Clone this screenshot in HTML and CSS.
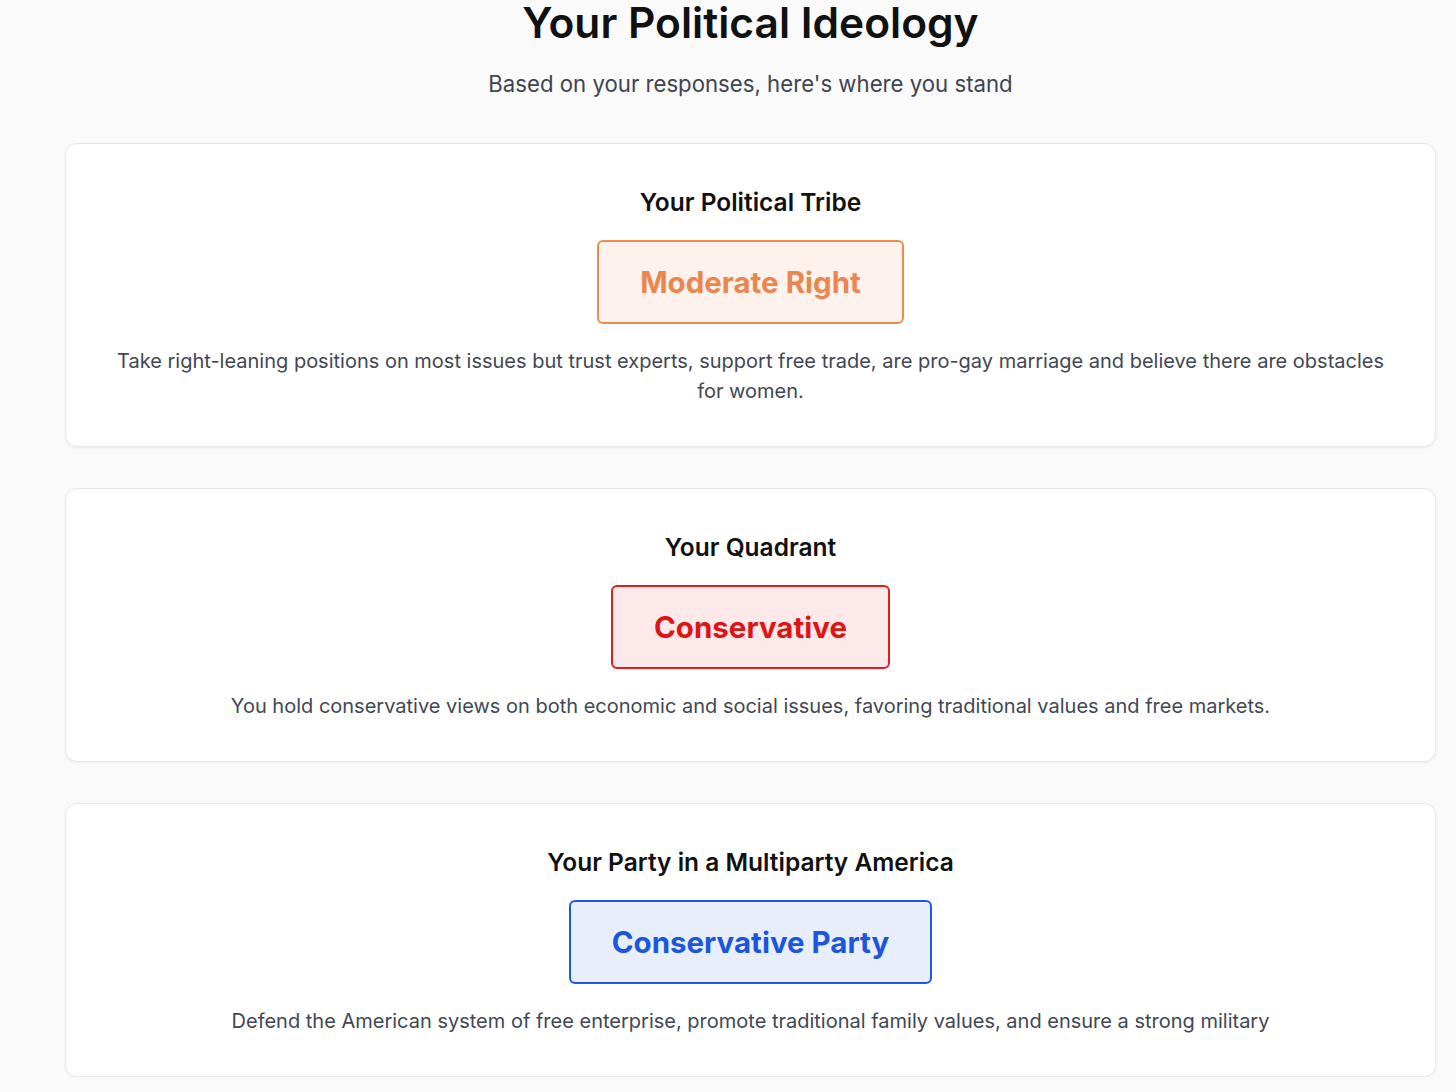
FILE: index.html
```html
<!DOCTYPE html>
<html lang="en">
<head>
<meta charset="utf-8">
<title>Your Political Ideology</title>
<link rel="stylesheet" href="styles.css">
</head>
<body>
<main class="page">
  <header class="intro">
    <h1 class="page-title">Your Political Ideology</h1>
    <p class="page-subtitle">Based on your responses, here's where you stand</p>
  </header>

  <section class="card">
    <h2 class="card-title">Your Political Tribe</h2>
    <div class="badge badge-orange">Moderate Right</div>
    <p class="card-desc">Take right-leaning positions on most issues but trust experts, support free trade, are pro-gay marriage and believe there are obstacles for women.</p>
  </section>

  <section class="card">
    <h2 class="card-title">Your Quadrant</h2>
    <div class="badge badge-red">Conservative</div>
    <p class="card-desc">You hold conservative views on both economic and social issues, favoring traditional values and free markets.</p>
  </section>

  <section class="card">
    <h2 class="card-title">Your Party in a Multiparty America</h2>
    <div class="badge badge-blue">Conservative Party</div>
    <p class="card-desc">Defend the American system of free enterprise, promote traditional family values, and ensure a strong military</p>
  </section>
</main>
</body>
</html>
```

FILE: styles.css
```css
* { box-sizing: border-box; }

html, body {
  margin: 0;
  padding: 0;
  background: #fafafa;
}

body {
  font-family: Inter, "Noto Sans", "Liberation Sans", sans-serif;
  color: #111111;
}

.page {
  width: 1371px;
  margin-left: 65px;
  display: flex;
  flex-direction: column;
  gap: 41px;
}

.intro {
  text-align: center;
  margin-top: -4.5px;
  margin-bottom: 3px;
}

.page-title {
  margin: 0;
  font-size: 42.5px;
  line-height: 54px;
  font-weight: 600;
  color: #111111;
}

.page-subtitle {
  margin: 19.5px 0 0;
  font-size: 22.2px;
  line-height: 30px;
  color: #3f4451;
}

.card {
  background: #ffffff;
  border: 1px solid #e5e7eb;
  border-radius: 12px;
  box-shadow: 0 1px 3px rgba(0, 0, 0, 0.06);
  padding: 42px 40px 40px;
  display: flex;
  flex-direction: column;
  align-items: center;
  text-align: center;
}

.card-title {
  margin: 0;
  font-size: 24.5px;
  line-height: 32px;
  font-weight: 600;
  color: #111111;
}

.badge {
  margin-top: 22px;
  padding: 24px 41px;
  border: 2px solid;
  border-radius: 6px;
  font-size: 29.5px;
  line-height: 32px;
  font-weight: 700;
}

.badge-orange {
  color: #ea8650;
  border-color: #ef8a4f;
  background: #fdf3ec;
}

.badge-red {
  color: #dc1515;
  border-color: #e11d1d;
  background: #fde9e9;
}

.badge-blue {
  color: #1b56dc;
  border-color: #1d58e0;
  background: #e8eefb;
}

.card-desc {
  margin: 22px 0 0;
  font-size: 20px;
  line-height: 30px;
  color: #414755;
}
```
